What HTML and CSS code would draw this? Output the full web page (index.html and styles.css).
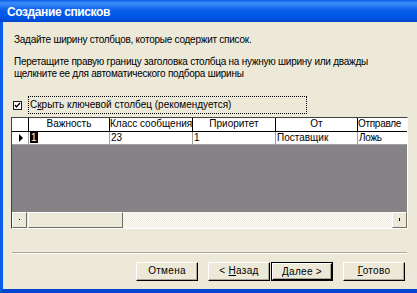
FILE: index.html
```html
<!DOCTYPE html>
<html lang="ru">
<head>
<meta charset="utf-8">
<link rel="stylesheet" href="styles.css">
</head>
<body>
<div class="window">
  <div class="titlebar"><span class="title">Создание списков</span></div>
  <div class="content">
    <p class="line1">Задайте ширину столбцов, которые содержит список.</p>
    <p class="line2">Перетащите правую границу заголовка столбца на нужную ширину или дважды<br>щелкните ее для автоматического подбора ширины</p>
    <div class="checkrow">
      <svg class="checkbox" width="9" height="9" viewBox="0 0 9 9"><rect x="0.5" y="0.5" width="8" height="8" fill="#fff" stroke="#1c1c1c"/><path d="M2 4 L3.5 6 L7 2" fill="none" stroke="#000" stroke-width="1.4"/></svg>
      <span class="checklabel">С<u>к</u>рыть ключевой столбец (рекомендуется)</span>
    </div>
    <div class="grid">
      <div class="hdr">
        <div class="c c0"></div>
        <div class="c c1">Важность</div>
        <div class="c c2">Класс сообщения</div>
        <div class="c c3">Приоритет</div>
        <div class="c c4">От</div>
        <div class="c c5">Отправле</div>
      </div>
      <div class="row">
        <div class="c c0"><span class="arrow"></span></div>
        <div class="c c1"><span class="sel">1</span></div>
        <div class="c c2">23</div>
        <div class="c c3">1</div>
        <div class="c c4">Поставщик</div>
        <div class="c c5">Ложь</div>
      </div>
      <div class="empty"></div>
      <div class="hscroll">
        <div class="sbtn"><span class="dot"></span></div>
        <div class="thumb"></div>
        <div class="track"></div>
        <div class="sbtn"><span class="tick"></span></div>
      </div>
    </div>
    <div class="sep"></div>
    <div class="buttons">
      <div class="btn">Отмена</div>
      <div class="btn b-back">&lt; <u>Н</u>азад</div>
      <div class="btn b-def"><u>Д</u>алее &gt;</div>
      <div class="btn b-done"><u>Г</u>отово</div>
    </div>
  </div>
</div>
</body>
</html>
```
FILE: styles.css
```css
* { box-sizing: border-box; }
html, body { margin: 0; padding: 0; }
body { width: 417px; height: 293px; overflow: hidden; background: #ECE9D8; font-family: "Liberation Sans", Arial, sans-serif; font-size: 10px; color: #000; }
.window { width: 417px; height: 293px; display: flex; flex-direction: column; border-left: 3px solid #0A5CEB; border-bottom: 4px solid #0046CF; background: #ECE9D8; }
.titlebar { height: 22px; flex: none; margin-left: -3px; padding-left: 7px; display: flex; align-items: center;
  background: linear-gradient(#0A5CE8 0, #3E8EF8 3px, #2A7AF4 6px, #0A5EEA 10px, #0058E6 16px, #004ED8 20px, #0044C4 22px); }
.title { color: #fff; font-weight: bold; font-size: 12px; letter-spacing: -0.4px; padding-top: 1px; }
.content { flex: 1; display: flex; flex-direction: column; padding: 12px 0 0 8px; }
p { margin: 0; line-height: 12px; letter-spacing: -0.25px; }
.line1 { padding-left: 3px; }
.line2 { margin-top: 10px; padding-left: 3px; }
.checkrow { margin-top: 16px; height: 18px; display: flex; align-items: center; padding-left: 2px; }
.checkbox { flex: none; margin-right: 6px; }
.checklabel { height: 18px; width: 279px; border: 1px dotted #000; padding: 2px 0 0 1px; line-height: 12px; }
.grid { margin-top: 3px; width: 397px; height: 112px; flex: none; border: 1px solid; border-color: #404040 #fff #fff #404040; background: #fff; display: flex; flex-direction: column; }
.hdr, .row { display: flex; flex: none; }
.hdr { height: 14px; border-bottom: 1px solid #000; background: #fff; }
.row { height: 13px; border-bottom: 1px solid #a0a0a0; }
.c { flex: none; border-right: 1px solid #000; line-height: 12px; white-space: nowrap; overflow: hidden; }
.row .c { border-right-color: #a0a0a0; padding-left: 1px; }
.hdr .c { text-align: center; }
.c0 { width: 17px; position: relative; }
.c1 { width: 81px; }
.c2 { width: 83px; }
.c3 { width: 83px; }
.c4 { width: 82px; }
.c5 { flex: 1; border-right: 0; text-align: left !important; letter-spacing: -0.3px; }
.arrow { position: absolute; left: 7px; top: 2px; width: 0; height: 0; border-left: 4px solid #000; border-top: 4px solid transparent; border-bottom: 4px solid transparent; }
.sel { background: #000; color: #fff; padding: 0 1px; }
.empty { flex: 1; background: #858386; }
.hscroll { height: 16px; flex: none; display: flex; background: #ECE9D8; }
.sbtn { width: 15px; height: 16px; flex: none; background: #ECE9D8; border: 1px solid; border-color: #fff #716F64 #716F64 #fff; position: relative; }
.dot { position: absolute; left: 6px; top: 6px; width: 1px; height: 1px; background: #000; }
.tick { position: absolute; left: 6px; top: 5px; width: 1px; height: 3px; background: #000; }
.thumb { width: 95px; flex: none; margin-left: 1px; border: 1px solid; border-color: #fff #716F64 #716F64 #fff; background: #ECE9D8; }
.track { flex: 1; background-color: #fff; background-image: repeating-conic-gradient(#ECE9D8 0 25%, #fff 0 50%); background-size: 2px 2px; }
.sep { margin-top: 23px; width: 395px; margin-left: 1px; height: 2px; flex: none; border-top: 1px solid #ACA899; border-bottom: 1px solid #fff; }
.buttons { margin-top: 8px; display: flex; justify-content: flex-end; padding-right: 12px; }
.btn { width: 62px; height: 19px; border: 1px solid; border-color: #fff #000 #000 #fff; box-shadow: inset -1px -1px 0 #ACA899; text-align: center; line-height: 16px; font-size: 10px; letter-spacing: 0.3px; }
.b-back { margin-left: 10px; }
.b-def { margin-left: 1px; outline: 1px solid #000; outline-offset: -1px; border-width: 2px; line-height: 15px; }
.b-done { margin-left: 10px; }
u { text-decoration: underline; }
```
